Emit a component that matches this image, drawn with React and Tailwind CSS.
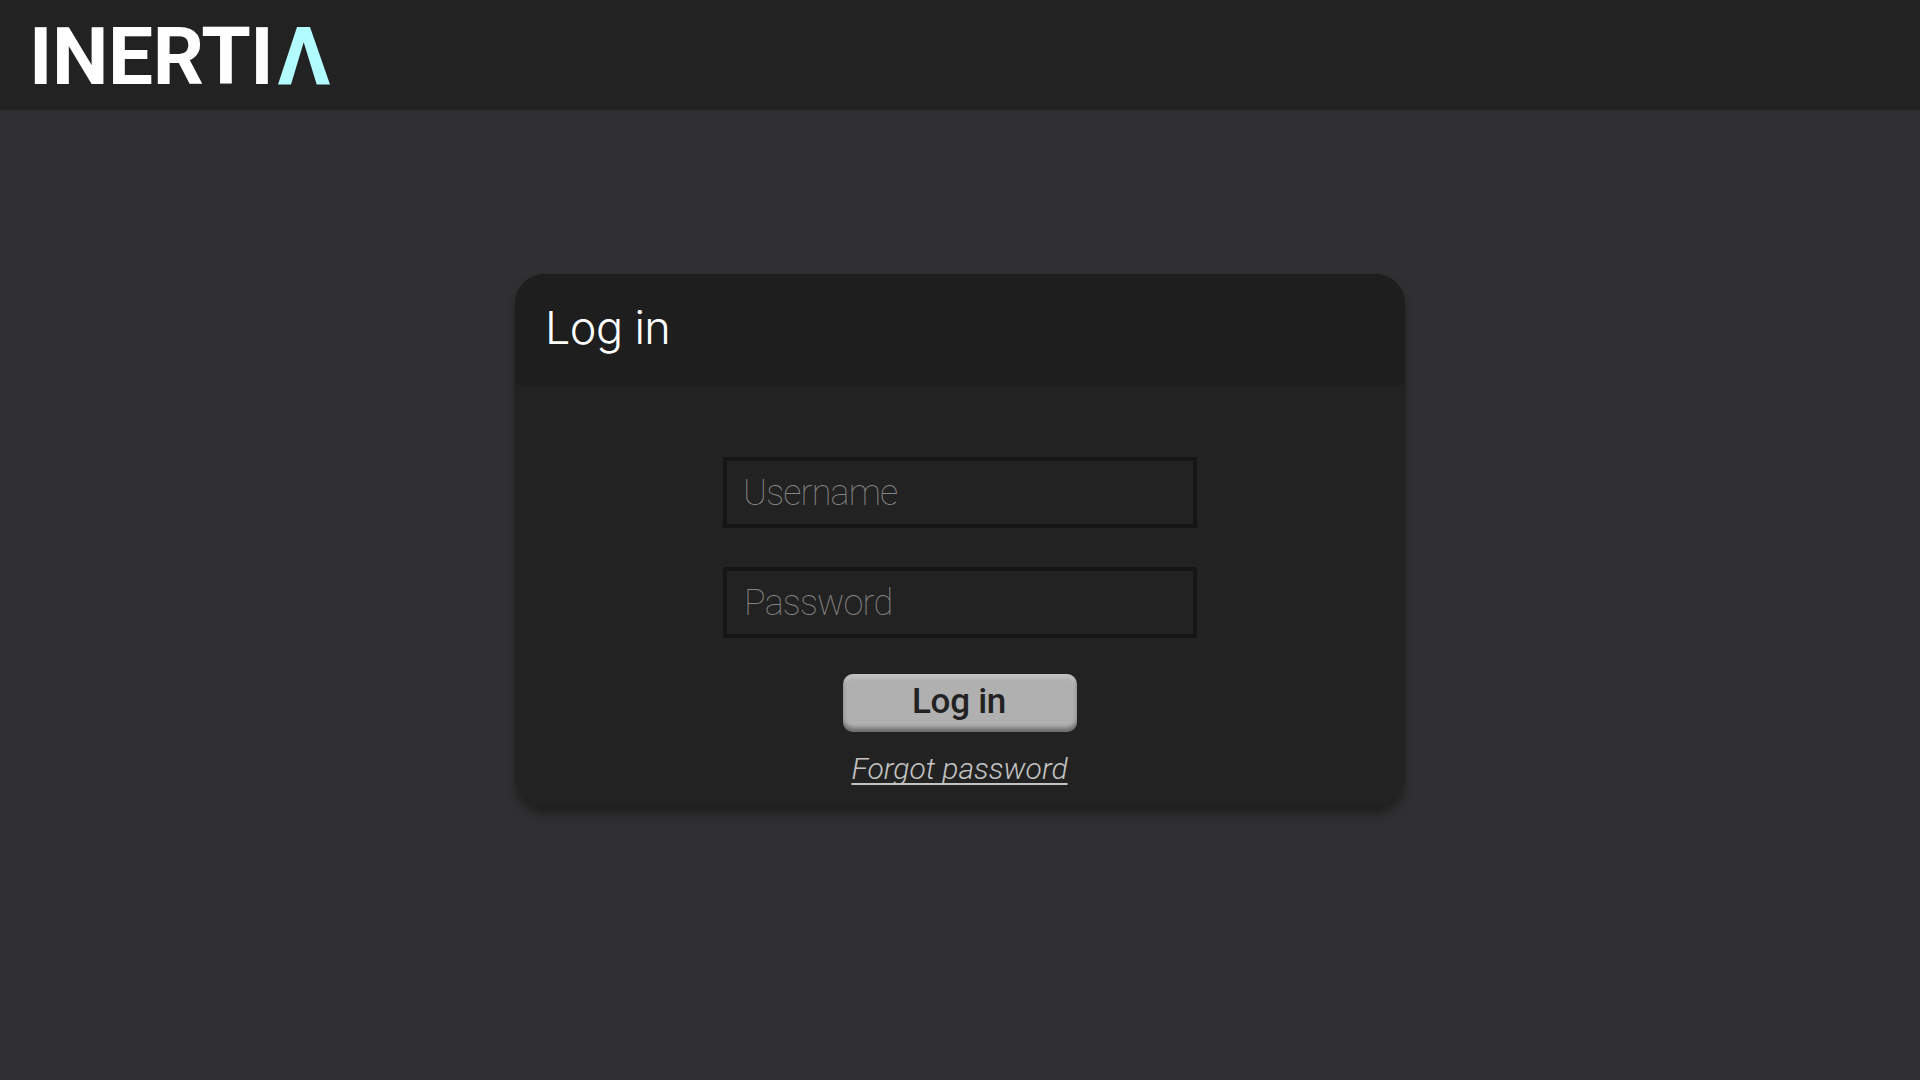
export default function App() {
  return (
    <div className="flex min-h-screen flex-col bg-[#303032] font-[Roboto,sans-serif] antialiased">
      <header className="flex h-[110px] items-center bg-[#222222] pt-[4px] pl-[29px]">
        <span className="text-[80px] leading-[106px] font-bold tracking-[-0.4px] text-white">INERTI</span>
        <svg className="mb-[2px] ml-[4.3px] h-[57.5px] w-[52px]" viewBox="0 0 52 57.5" fill="#b2fbff">
          <path d="M19 0H32L52 57.500H38.700L25.700 15.300L13 57.500H0Z" />
        </svg>
      </header>
      <main className="flex flex-col items-center pt-[164px]">
        <section className="h-[532px] w-[890px] rounded-[30px] bg-[#222222] shadow-[0_8px_10px_rgba(0,0,0,0.35)]">
          <h1 className="flex h-[111px] items-center rounded-t-[30px] bg-[#1e1e1e] pb-[3px] pl-[30px] font-[Inter,sans-serif] text-[45px] font-light tracking-[-0.6px] text-white">
            Log in
          </h1>
          <form className="flex flex-col items-center pt-[72px]">
            <input
              type="text"
              placeholder="Username"
              className="h-[71px] w-[474px] border-4 border-[#151515] px-4 text-[36px] font-thin tracking-[-0.85px] placeholder:text-[#858585]"
            />
            <input
              type="password"
              placeholder="Password"
              className="mt-[39px] h-[71px] w-[474px] border-4 border-[#151515] px-[17px] text-[36px] font-thin tracking-[-0.8px] placeholder:text-[#858585]"
            />
            <button
              type="button"
              className="mt-[36px] h-[58px] w-[234px] rounded-[10px] bg-[#b0b0b0] pr-[8px] pb-px pl-[6px] text-[35px] font-medium tracking-[-0.25px] text-[#222] shadow-[inset_0_-4px_4px_rgba(0,0,0,0.4),inset_0_4px_4px_rgba(255,255,255,0.25)]"
            >
              Log in
            </button>
            <a className="mt-[14px] mr-px text-[30px] font-light text-[#c4c4c4] italic underline decoration-2 underline-offset-4 [text-decoration-skip-ink:none]">
              Forgot password
            </a>
          </form>
        </section>
      </main>
    </div>
  );
}
